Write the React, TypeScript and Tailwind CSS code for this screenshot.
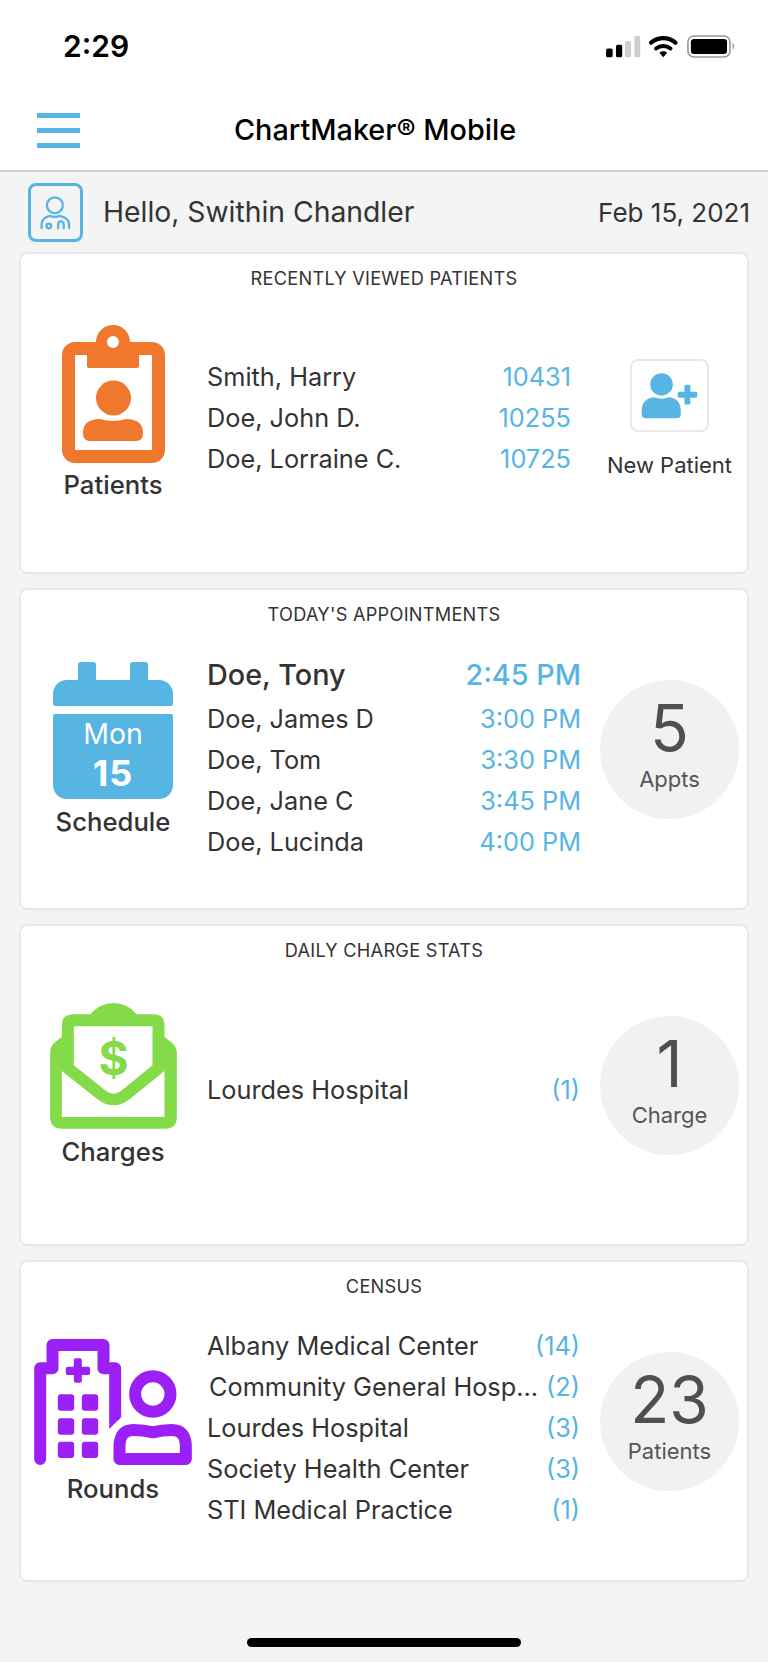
import type { ReactNode } from 'react'

const patients = [
  { name: 'Smith, Harry', value: '10431' },
  { name: 'Doe, John D.', value: '10255' },
  { name: 'Doe, Lorraine C.', value: '10725' },
]

const appointments = [
  { name: 'Doe, James D', value: '3:00 PM' },
  { name: 'Doe, Tom', value: '3:30 PM' },
  { name: 'Doe, Jane C', value: '3:45 PM' },
  { name: 'Doe, Lucinda', value: '4:00 PM' },
]

const census = [
  { name: 'Albany Medical Center', value: '(14)' },
  { name: 'Community General Hosp...', value: '(2)', indent: true },
  { name: 'Lourdes Hospital', value: '(3)' },
  { name: 'Society Health Center', value: '(3)' },
  { name: 'STI Medical Practice', value: '(1)' },
]

const StatusIcons = () => (
  <svg viewBox="46 102 395 70" className="h-[23px] w-[132px]">
    <rect x="46" y="143" width="20" height="27" rx="5" fill="#000" />
    <rect x="76" y="132" width="19" height="38" rx="5" fill="#000" />
    <rect x="103" y="120" width="19" height="50" rx="5" fill="#cfcfcf" />
    <rect x="132" y="105" width="18" height="65" rx="5" fill="#cfcfcf" />
    <path d="M183 125 A58 58 0 0 1 257 125" fill="none" stroke="#000" strokeWidth="13" strokeLinecap="round" />
    <path d="M198 143 A35 35 0 0 1 242 143" fill="none" stroke="#000" strokeWidth="12" strokeLinecap="round" />
    <path d="M208 156 Q220 147 232 156 L220 170 Z" fill="#000" />
    <rect x="295" y="105" width="128" height="64" rx="18" fill="none" stroke="#999" strokeWidth="5" />
    <rect x="304" y="114" width="110" height="46" rx="10" fill="#000" />
    <path d="M431 125 Q441 136 431 148 Z" fill="#999" />
  </svg>
)

const DoctorIcon = () => (
  <svg viewBox="78 76 92 106" className="h-[35px] w-[31px]" fill="none" stroke="#56b5e3" strokeWidth="7" strokeLinecap="round">
    <circle cx="122" cy="107" r="24" />
    <path d="M82 176 V165 Q82 145 107 139 Q122 146 137 139 Q165 145 165 165 V176" />
    <circle cx="104" cy="170" r="7" />
    <path d="M132 177 V167 Q132 156 140 156 Q149 156 149 167 V177" />
  </svg>
)

const ClipboardIcon = () => (
  <svg viewBox="0 0 103 138" className="h-[138px] w-[103px]">
    <path
      fillRule="evenodd"
      fill="#f0782d"
      d="M34 17 A17 17 0 0 1 68 17 H90 A13 13 0 0 1 103 30 V125 A13 13 0 0 1 90 138 H13 A13 13 0 0 1 0 125 V30 A13 13 0 0 1 13 17 Z M45 17 A6 6 0 0 0 57 17 A6 6 0 0 0 45 17 Z M13 30 V125 H90 V30 H77 V41 Q77 43 75 43 H27 Q25 43 25 41 V30 Z"
    />
    <circle cx="51.5" cy="73" r="17.5" fill="#f0782d" />
    <path d="M21 108 Q21 94 38 94 Q51 98 64 94 Q81 94 81 108 Q81 116 74 116 H28 Q21 116 21 108 Z" fill="#f0782d" />
  </svg>
)

const CalendarIcon = () => (
  <div className="flex h-[137px] w-[120px] flex-col items-center">
    <div className="flex w-full justify-between px-[25px]">
      <div className="h-[18px] w-[18px] rounded-t-[3px] bg-[#56b5e3]" />
      <div className="h-[18px] w-[18px] rounded-t-[3px] bg-[#56b5e3]" />
    </div>
    <div className="h-[26px] w-full rounded-t-[14px] rounded-b-[2px] bg-[#56b5e3]" />
    <div className="mt-[8px] flex h-[85px] w-full flex-col items-center rounded-t-[2px] rounded-b-[14px] bg-[#56b5e3] text-white">
      <span className="text-[28.5px] leading-[39px]">Mon</span>
      <span className="text-[36px] leading-[41px] font-bold tracking-[1px]">15</span>
    </div>
  </div>
)

const EnvelopeIcon = () => (
  <svg viewBox="75 38 380 378" className="h-[126px] w-[127px]">
    <path
      fillRule="evenodd"
      fill="#84db49"
      d="M110 415 Q75 415 75 380 L75 185 Q75 168 90 155 L110 140 L110 105 Q110 72 145 72 L195 72 Q225 38 265 38 Q305 38 335 72 L385 72 Q418 72 418 105 L418 140 L440 157 Q455 170 455 190 L455 380 Q455 415 420 415 Z M146 108 L146 225 L240 300 Q265 320 290 300 L382 225 L382 108 Z M110 242 L110 380 L418 380 L418 242 L315 325 Q265 365 215 325 Z"
    />
    <text x="265" y="253" textAnchor="middle" fontSize="138" fontWeight="700" fill="#84db49">$</text>
  </svg>
)

const RoundsIcon = () => (
  <svg viewBox="27 42 473 378" className="h-[126px] w-[158px]">
    <g fill="none" stroke="#9b20f5" strokeWidth="36" strokeLinecap="round" strokeLinejoin="round">
      <path d="M45 402 V130 H82 V60 H235 V130 H270 V270" />
      <circle cx="383" cy="207" r="53" />
      <path d="M283 402 H482 V365 Q482 315 440 315 Q410 315 383 322 Q355 315 325 315 Q283 315 283 365 Z" />
    </g>
    <polygon points="252,270 288,270 288,276 252,312" fill="#9b20f5" />
    <rect x="122" y="125" width="73" height="25" rx="6" fill="#9b20f5" />
    <rect x="146" y="100" width="24" height="73" rx="6" fill="#9b20f5" />
    {[208, 280, 350].map((y) => (
      <g key={y} fill="#9b20f5">
        <rect x="98" y={y} width="49" height="49" rx="9" />
        <rect x="170" y={y} width="49" height="49" rx="9" />
      </g>
    ))}
  </svg>
)

const AddUserIcon = () => (
  <svg viewBox="90 84 172 138" className="h-[46px] w-[57px]" fill="#56b5e3">
    <circle cx="152" cy="118" r="34" />
    <path d="M92 200 Q92 160 130 157 Q152 166 174 157 Q210 160 210 200 V208 Q210 220 198 220 H104 Q92 220 92 208 Z" />
    <rect x="201" y="140" width="59" height="18" rx="5" />
    <rect x="221" y="119" width="18" height="60" rx="5" />
  </svg>
)

const Card = ({ title, children }: { title: string; children: ReactNode }) => (
  <section className="h-[322px] w-[730px] rounded-[9px] border-2 border-[#e8e8e8] bg-white">
    <h2 className="h-[45px] text-center text-[18.2px] leading-[48px] font-normal tracking-[0.25px] text-[#333]">
      {title}
    </h2>
    <div className="flex">{children}</div>
  </section>
)

const Feature = ({ icon, label, top, gap }: { icon: ReactNode; label: string; top: string; gap: string }) => (
  <div className={`flex w-[184px] flex-col items-center ${top}`}>
    {icon}
    <span className={`text-[25.7px] leading-[30px] font-medium text-[#333] ${gap}`}>{label}</span>
  </div>
)

const Row = ({ name, value, indent }: { name: string; value: string; indent?: boolean }) => (
  <div className="flex h-[41px] items-center justify-between text-[25.3px]">
    <span className={`whitespace-nowrap text-[#333] ${indent ? 'pl-[2px]' : ''}`}>{name}</span>
    <span className="whitespace-nowrap text-[#56b5e3]">{value}</span>
  </div>
)

const Bubble = ({ count, label }: { count: string; label: string }) => (
  <div className="mt-[45px] ml-[18px] flex h-[139px] w-[139px] flex-col items-center rounded-full bg-[#f1f1f1] pt-[18px]">
    <span className="text-[64px] leading-[60px] text-[#4f4f4f]">{count}</span>
    <span className="mt-[8px] text-[22px] leading-[26px] text-[#555]">{label}</span>
  </div>
)

export default function App() {
  return (
    <div className="relative h-[1662px] w-[768px] overflow-hidden bg-[#f4f4f4] font-['Inter',sans-serif]">
      <header className="h-[172px] border-b-2 border-[#cfcfcf] bg-white">
        <div className="flex h-[93px] items-center justify-between pr-[31px] pl-[63px]">
          <span className="text-[30px] font-semibold text-black">2:29</span>
          <StatusIcons />
        </div>
        <div className="flex h-[77px] items-center pb-[3px] pl-[37px]">
          <div className="flex w-[43px] flex-col gap-[10px]">
            <div className="h-[5px] bg-[#56b5e3]" />
            <div className="h-[5px] bg-[#56b5e3]" />
            <div className="h-[5px] bg-[#56b5e3]" />
          </div>
          <h1 className="ml-[154px] text-[28.8px] font-medium whitespace-nowrap text-black">ChartMaker® Mobile</h1>
        </div>
      </header>

      <div className="flex h-[80px] items-center justify-between pr-[18px] pl-[28px]">
        <div className="flex items-center">
          <div className="flex h-[59px] w-[55px] items-center justify-center rounded-[8px] border-[3.5px] border-[#56b5e3]">
            <DoctorIcon />
          </div>
          <span className="ml-[20px] text-[28.3px] text-[#333]">Hello, Swithin Chandler</span>
        </div>
        <span className="text-[26px] text-[#333]">Feb 15, 2021</span>
      </div>

      <main className="flex flex-col gap-[14px] pl-[19px]">
        <Card title="RECENTLY VIEWED PATIENTS">
          <Feature icon={<ClipboardIcon />} label="Patients" top="pt-[26px]" gap="mt-[7px]" />
          <div className="ml-[2px] w-[375px] pt-[57px] pr-[11px]">
            {patients.map((p) => (
              <Row key={p.value} {...p} />
            ))}
          </div>
          <div className="ml-[18px] flex w-[139px] flex-col items-center pt-[60px]">
            <div className="flex h-[73px] w-[79px] items-center justify-center rounded-[8px] border-2 border-[#e8e8e8]">
              <AddUserIcon />
            </div>
            <span className="mt-[20px] text-[22px] leading-[26px] whitespace-nowrap text-[#333]">New Patient</span>
          </div>
        </Card>

        <Card title="TODAY'S APPOINTMENTS">
          <Feature icon={<CalendarIcon />} label="Schedule" top="pt-[27px]" gap="mt-[8px]" />
          <div className="ml-[2px] w-[375px] pt-[17px] pr-[1px]">
            <div className="flex h-[46px] items-center justify-between text-[28.8px] font-medium">
              <span className="text-[#333]">Doe, Tony</span>
              <span className="text-[#56b5e3]">2:45 PM</span>
            </div>
            {appointments.map((a) => (
              <Row key={a.value} {...a} />
            ))}
          </div>
          <Bubble count="5" label="Appts" />
        </Card>

        <Card title="DAILY CHARGE STATS">
          <Feature icon={<EnvelopeIcon />} label="Charges" top="pt-[32px]" gap="mt-[8px]" />
          <div className="ml-[2px] w-[375px] pt-[98px] pr-[2px]">
            <Row name="Lourdes Hospital" value="(1)" />
          </div>
          <Bubble count="1" label="Charge" />
        </Card>

        <Card title="CENSUS">
          <Feature icon={<RoundsIcon />} label="Rounds" top="pt-[32px]" gap="mt-[9px]" />
          <div className="ml-[2px] w-[375px] pt-[18px] pr-[2px]">
            {census.map((c) => (
              <Row key={c.name} {...c} />
            ))}
          </div>
          <Bubble count="23" label="Patients" />
        </Card>
      </main>

      <div className="absolute bottom-[15px] left-[247px] h-[9px] w-[274px] rounded-full bg-black" />
    </div>
  )
}
